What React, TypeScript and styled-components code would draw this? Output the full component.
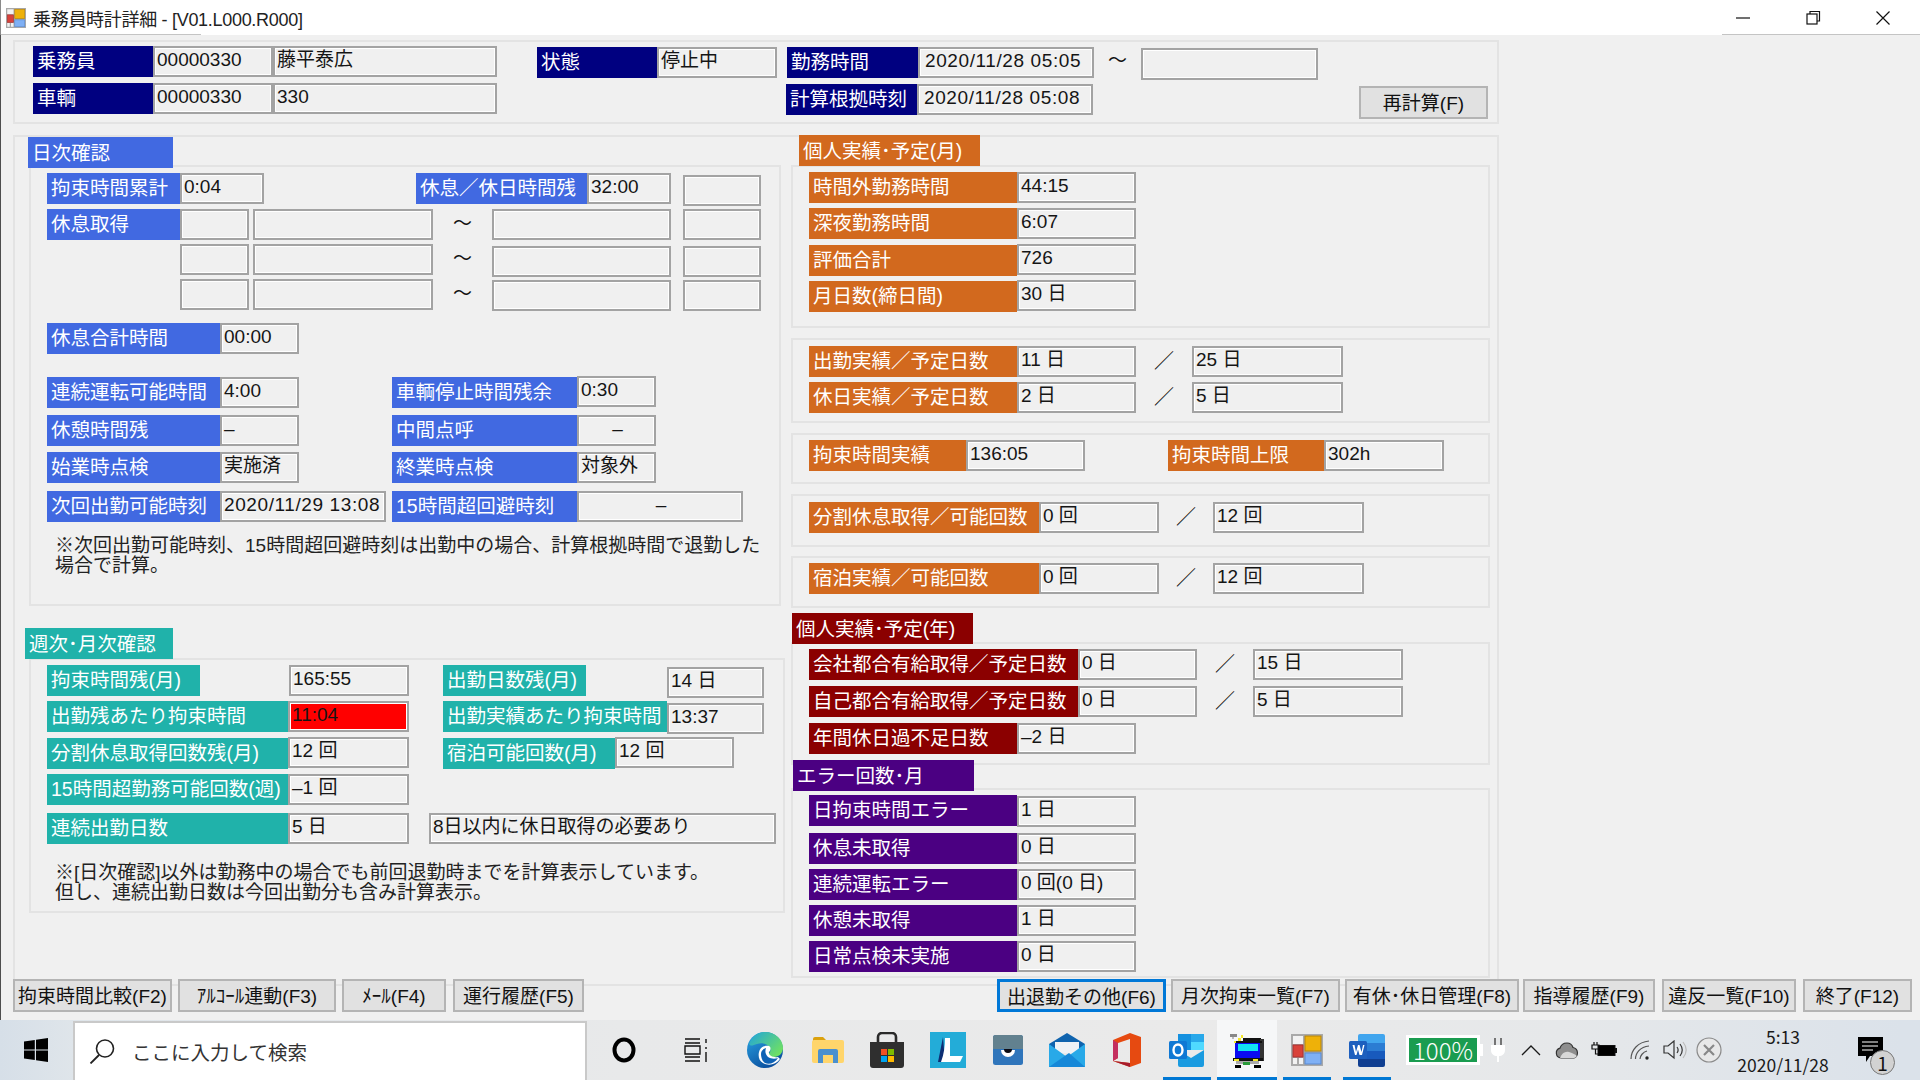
import React from "react";
import styled, { createGlobalStyle } from "styled-components";

const UI_FONT = `"Liberation Sans", "Noto Sans CJK JP", sans-serif`;

const Global = createGlobalStyle`
  html, body { margin: 0; padding: 0; background: #f0f0f0; }
  #root { width: 1920px; height: 1080px; overflow: hidden; }
  * { box-sizing: border-box; }
`;

const tones = {
  navy: "#000080",
  blue: "#4169e1",
  teal: "#20b2aa",
  orange: "#d2691e",
  red: "#8b0000",
  purple: "#4b0082",
};
type Tone = keyof typeof tones;

const Page = styled.div`
  width: 1920px;
  height: 1080px;
  display: flex;
  flex-direction: column;
  font-family: ${UI_FONT};
  color: #111;
`;

const TitleBar = styled.header`
  position: relative;
  height: 35px;
  flex: none;
  background: #fff;
  display: flex;
  align-items: center;
  padding-left: 5px;
  border-left: 1px solid #8a8a8a;
  &::before, &::after {
    content: "";
    position: absolute;
    bottom: 0;
    height: 1px;
    background: #c4c4c4;
  }
  &::before { left: 0; width: 200px; }
  &::after { right: 0; width: 198px; }
`;

const TitleText = styled.span`
  margin-left: 7px;
  font-size: 18px;
  letter-spacing: -0.3px;
  color: #222;
`;

const WindowControls = styled.div`
  margin-left: auto;
  display: flex;
  height: 100%;
  padding-right: 2px;
`;

const ControlButton = styled.div`
  width: 70px;
  display: flex;
  align-items: center;
  justify-content: center;
`;

const Client = styled.main`
  flex: 1;
  min-height: 0;
  background: #f0f0f0;
  border-left: 1px solid #4d4d4d;
  padding: 5px 0 0 12px;
`;

const GroupFrame = styled.section<{ $w: number; $h: number; $mt?: number }>`
  width: ${(p) => p.$w}px;
  height: ${(p) => p.$h}px;
  margin-top: ${(p) => p.$mt ?? 0}px;
  border: 2px solid #e3e3e3;
`;

const HeaderFrame = styled(GroupFrame)`
  padding: 4px 0 0 18px;
`;

const MainFrame = styled(GroupFrame)`
  display: flex;
  align-items: flex-start;
`;

const LeftColumn = styled.div`
  width: 776px;
  flex: none;
  padding-left: 10px;
`;

const RightColumn = styled.div`
  flex: none;
  margin-top: -2px;
`;

const SectionTitle = styled.h2<{ $tone: Tone; $w: number; $ml?: number; $mt?: number }>`
  position: relative;
  z-index: 1;
  margin: ${(p) => p.$mt ?? 0}px 0 -3px ${(p) => p.$ml ?? 0}px;
  width: ${(p) => p.$w}px;
  height: 31px;
  background: ${(p) => tones[p.$tone]};
  color: #fff;
  font-size: 19.5px;
  font-weight: 400;
  line-height: 32px;
  padding-left: 4px;
  white-space: nowrap;
`;

const Panel = styled.div<{ $w: number; $h: number; $ml?: number; $mt?: number; $pt?: number }>`
  width: ${(p) => p.$w}px;
  height: ${(p) => p.$h}px;
  margin-left: ${(p) => p.$ml ?? 0}px;
  margin-top: ${(p) => p.$mt ?? 0}px;
  padding: ${(p) => p.$pt ?? 5}px 0 0 16px;
  border: 2px solid #e3e3e3;
`;

const Row = styled.div<{ $h: number }>`
  display: flex;
  align-items: flex-start;
  height: ${(p) => p.$h}px;
`;

const Label = styled.div<{ $tone: Tone; $w: number; $ml?: number; $dy?: number; $h?: number }>`
  flex: none;
  width: ${(p) => p.$w}px;
  height: ${(p) => p.$h ?? 31}px;
  margin-left: ${(p) => p.$ml ?? 0}px;
  margin-top: ${(p) => p.$dy ?? 0}px;
  background: ${(p) => tones[p.$tone]};
  color: #fff;
  font-size: 19.5px;
  line-height: ${(p) => p.$h ?? 31}px;
  padding-left: 4px;
  white-space: nowrap;
  overflow: hidden;
`;

const Value = styled.div<{ $w: number; $ml?: number; $dy?: number; $h?: number; $center?: boolean; $alert?: boolean; $track?: number; $pl?: number }>`
  flex: none;
  width: ${(p) => p.$w}px;
  height: ${(p) => p.$h ?? 31}px;
  margin-left: ${(p) => p.$ml ?? 0}px;
  margin-top: ${(p) => p.$dy ?? 0}px;
  background: ${(p) => (p.$alert ? "#ff0000" : "#f0f0f0")};
  border: 2px solid #a3a3a3;
  box-shadow: inset 0 0 0 1px #fff;
  font-size: 19px;
  letter-spacing: ${(p) => p.$track ?? 0}px;
  color: #151515;
  line-height: 24px;
  padding-left: ${(p) => p.$pl ?? 2}px;
  text-align: ${(p) => (p.$center ? "center" : "left")};
  white-space: nowrap;
  overflow: hidden;
`;

const Tilde = styled.div<{ $w: number; $ml?: number }>`
  flex: none;
  width: ${(p) => p.$w}px;
  margin-left: ${(p) => p.$ml ?? 0}px;
  text-align: center;
  font-size: 19px;
  line-height: 30px;
`;

const Slash = styled.div<{ $w: number }>`
  flex: none;
  width: ${(p) => p.$w}px;
  text-align: center;
  font-size: 20px;
  font-family: "Noto Sans CJK JP", sans-serif;
  line-height: 28px;
`;

const Note = styled.p`
  margin: 0 0 0 8px;
  width: 710px;
  font-size: 19px;
  line-height: 19.5px;
  color: #222;
`;

const HeaderButton = styled.button`
  flex: none;
  width: 129px;
  height: 33px;
  margin: 3px 0 0 266px;
  background: #e1e1e1;
  border: 2px solid #b4b4b4;
  font-family: inherit;
  font-size: 19px;
  color: #111;
  padding: 0 0 2px;
`;

const ButtonBar = styled.div`
  display: flex;
  justify-content: space-between;
  margin-top: -7px;
  padding-right: 8px;
  height: 33px;
`;

const ButtonGroup = styled.div`
  display: flex;
`;

const KeyButton = styled.button<{ $w: number; $ml?: number; $focused?: boolean }>`
  flex: none;
  width: ${(p) => p.$w}px;
  height: 33px;
  margin-left: ${(p) => p.$ml ?? 0}px;
  background: #e1e1e1;
  border: ${(p) => (p.$focused ? "3px solid #0078d7" : "2px solid #b4b4b4")};
  font-family: inherit;
  font-size: 19px;
  color: #111;
  padding: 0 0 2px;
  white-space: nowrap;
  overflow: hidden;
`;

const Taskbar = styled.footer`
  height: 60px;
  flex: none;
  display: flex;
  background: linear-gradient(90deg, #d6dfe8 0, #dfe5ea 73px, #e8e9ea 620px, #eaeaea 1200px, #e6e8ea 1560px, #dbe2ea 1900px);
`;

const StartSlot = styled.div`
  width: 73px;
  flex: none;
  display: flex;
  align-items: center;
  justify-content: center;
  padding-right: 2px;
`;

const SearchBox = styled.div`
  width: 514px;
  flex: none;
  margin-top: 1px;
  background: #fff;
  border: 2px solid #c9c9c9;
  border-bottom: none;
  display: flex;
  align-items: center;
  padding-left: 14px;
`;

const SearchText = styled.span`
  margin-left: 17px;
  font-size: 19.5px;
  color: #333;
`;

const Slot = styled.div<{ $w: number; $active?: boolean; $run?: boolean }>`
  position: relative;
  flex: none;
  width: ${(p) => p.$w}px;
  display: flex;
  align-items: center;
  justify-content: center;
  background: ${(p) => (p.$active ? "#f6f7f8" : "transparent")};
  &::after {
    content: "";
    display: ${(p) => (p.$run ? "block" : "none")};
    position: absolute;
    bottom: 0;
    left: ${(p) => (p.$active ? 0 : 6)}px;
    right: ${(p) => (p.$active ? 0 : 6)}px;
    height: 3px;
    background: #0078d4;
  }
`;

const BatteryMeter = styled.div`
  flex: none;
  width: 74px;
  height: 30px;
  margin: 15px 0 0 9px;
  background: #1a9c50;
  border: 3px solid #fff;
  color: #fff;
  font-size: 24px;
  line-height: 24px;
  text-align: center;
  font-family: "Noto Sans CJK JP", sans-serif;
  font-weight: 300;
`;

const BatteryNub = styled.div`
  flex: none;
  width: 3px;
  height: 12px;
  margin-top: 24px;
  background: #fff;
`;

const Clock = styled.div`
  flex: none;
  width: 114px;
  display: flex;
  flex-direction: column;
  align-items: center;
  font-family: "Noto Sans CJK JP", sans-serif;
  font-size: 17.5px;
  color: #1a1a1a;
  padding-top: 3px;
  line-height: 28px;
`;

const Badge = styled.div`
  position: absolute;
  left: 30px;
  top: 30px;
  width: 25px;
  height: 25px;
  border-radius: 50%;
  background: #d2d2d2;
  border: 1px solid #777;
  font-size: 19px;
  line-height: 24px;
  text-align: center;
  color: #111;
  font-family: "Noto Sans CJK JP", sans-serif;
`;

/* ---------- drawings ---------- */

const AppIcon = ({ size = 32 }: { size?: number }) => (
  <svg width={size} height={size} viewBox="0 0 32 32">
    <rect x="0" y="0" width="32" height="32" fill="#a9a9a9" />
    <rect x="2" y="2" width="10" height="8" fill="#f2f2f2" />
    <rect x="14" y="2" width="16" height="15" fill="#eeb109" stroke="#b8860b" />
    <rect x="2" y="11" width="10" height="12" fill="#d9423a" stroke="#a33" />
    <rect x="14" y="19" width="16" height="11" fill="#7fb0f5" stroke="#5a8ad0" />
    <rect x="2" y="24" width="4" height="6" fill="#f2f2f2" />
    <rect x="8" y="24" width="4" height="6" fill="#f2f2f2" />
  </svg>
);

const WinLogo = () => (
  <svg width="24" height="24" viewBox="0 0 24 24" fill="#000">
    <path d="M0 3.4 10.8 1.9V11.4H0zM12 1.7 24 0V11.4H12zM0 12.6H10.8V22.1L0 20.6zM12 12.6H24V24L12 22.3z" />
  </svg>
);

const Magnifier = () => (
  <svg width="26" height="25" viewBox="0 0 26 25" fill="none" stroke="#222" strokeWidth="1.6">
    <circle cx="16" cy="9.5" r="8.5" />
    <path d="M10 16 1.5 24.5" strokeWidth="1.8" />
  </svg>
);

const CortanaRing = () => (
  <svg width="24" height="26" viewBox="0 0 24 26" fill="none">
    <ellipse cx="12" cy="13" rx="9.5" ry="10.5" stroke="#000" strokeWidth="4" />
  </svg>
);

const TaskView = () => (
  <svg width="24" height="24" viewBox="0 0 24 24" fill="none" stroke="#111" strokeWidth="1.4">
    <path d="M1 1h15M1 23h15M1 5h15M1 19h15M1 8h15v8H1zM22 1v4M22 9v2M22 14v10" />
  </svg>
);

const Edge = () => (
  <svg width="36" height="36" viewBox="0 0 36 36">
    <defs>
      <linearGradient id="edgeBlue" x1="0" y1="0" x2="0.6" y2="1">
        <stop offset="0" stopColor="#2aa6e6" />
        <stop offset="1" stopColor="#0b4f9e" />
      </linearGradient>
      <linearGradient id="edgeGreen" x1="0" y1="0" x2="1" y2="0.7">
        <stop offset="0" stopColor="#1fa4dc" />
        <stop offset="1" stopColor="#6fe063" />
      </linearGradient>
    </defs>
    <circle cx="18" cy="18" r="18" fill="url(#edgeBlue)" />
    <path d="M2 12C5 4 11 0 18 0c10 0 18 7 18 16 0 5-4 9-9 9-3 0-6-1-6-3 2-1 3-3 2-6-2-4-8-6-13-4-4 1-6 3-8 0z" fill="url(#edgeGreen)" />
    <path d="M12 20c1-5 6-7 10-6 2 1 2 4 0 6-1 3 4 6 9 5l2 2c-4 6-12 7-17 4-4-2-5-7-4-11z" fill="#fff" />
    <path d="M14 22c0-3 2-5 5-6-1 3-1 6 2 9 3 2 7 2 10 1-3 5-9 7-13 5-3-2-4-6-4-9z" fill="#0e62b5" />
  </svg>
);

const Explorer = () => (
  <svg width="32" height="26" viewBox="0 0 32 26">
    <path d="M1 2a2 2 0 0 1 2-2h8l4 4H1z" fill="#dba10d" />
    <path d="M0 5a2 2 0 0 1 2-2h28a2 2 0 0 1 2 2v19a2 2 0 0 1-2 2H2a2 2 0 0 1-2-2z" fill="#ffd56b" />
    <path d="M6 26V14a2 2 0 0 1 2-2h16a2 2 0 0 1 2 2v12h-5v-8H11v8z" fill="#4a90cf" />
  </svg>
);

const Store = () => (
  <svg width="36" height="36" viewBox="0 0 36 36">
    <path d="M9 10V5a4 4 0 0 1 4-4h10a4 4 0 0 1 4 4v5" fill="none" stroke="#2a2a2a" strokeWidth="2.6" />
    <path d="M1 10h34v23a3 3 0 0 1-3 3H4a3 3 0 0 1-3-3z" fill="#2f2f2f" />
    <rect x="12" y="17" width="6" height="6" fill="#f25022" />
    <rect x="19" y="17" width="6" height="6" fill="#7fba00" />
    <rect x="12" y="24" width="6" height="6" fill="#00a4ef" />
    <rect x="19" y="24" width="6" height="6" fill="#ffb900" />
  </svg>
);

const LApp = () => (
  <svg width="36" height="36" viewBox="0 0 36 36">
    <rect width="36" height="36" fill="#23acd8" />
    <path d="M13 5 8 30h7z" fill="#0d2f74" />
    <path d="M15 6h5v18h13l-3 6H11c3-8 4-16 4-24z" fill="#fff" />
  </svg>
);

const Pocket = () => (
  <svg width="30" height="30" viewBox="0 0 30 30">
    <rect width="30" height="30" rx="2.5" fill="#2f75bb" />
    <path d="M0 2.5A2.500 2.500 0 0 1 2.500 0h25A2.500 2.500 0 0 1 30 2.500V14H0z" fill="#62818f" />
    <path d="M8 15h14a7 7 0 0 1-14 0z" fill="#fff" />
    <path d="M11 14h8a4 4 0 0 1-8 0z" fill="#0b0b14" />
  </svg>
);

const Mail = () => (
  <svg width="36" height="34" viewBox="0 0 36 34">
    <path d="M0 11 18 0l18 11v5H0z" fill="#0f63ae" />
    <path d="M6 9h24v11H6z" fill="#eef2f6" />
    <path d="M0 11 18 24 36 11v23H0z" fill="#28a9e8" />
    <path d="M36 34H0l20-14z" fill="#1688d8" />
  </svg>
);

const Office = () => (
  <svg width="28" height="34" viewBox="0 0 28 34">
    <path d="M17 0 28 4v26l-11 4L0 28l17 2V6L5 10v15l-5 3V7z" fill="#e64a11" />
    <path d="M5 10 0 7v21l5-3z" fill="#c42f5f" />
    <path d="M17 30 0 28l17 6z" fill="#a71c2d" />
  </svg>
);

const Outlook = () => (
  <svg width="36" height="33" viewBox="0 0 36 33">
    <rect x="9" y="0" width="26" height="16" fill="#1490df" />
    <rect x="22" y="0" width="13" height="8" fill="#28a8ea" />
    <rect x="22" y="8" width="13" height="8" fill="#50d9ff" />
    <path d="M9 16 22 24 35 16v15a2 2 0 0 1-2 2H11a2 2 0 0 1-2-2z" fill="#1a9be0" />
    <rect x="0" y="7" width="18" height="18" rx="1.500" fill="#0f78d4" />
    <ellipse cx="9" cy="16" rx="4.500" ry="5.500" fill="none" stroke="#fff" strokeWidth="2.400" />
  </svg>
);

const Truck = () => (
  <svg width="36" height="36" viewBox="0 0 36 36" shapeRendering="crispEdges">
    <rect x="1" y="2" width="7" height="3" fill="#888" />
    <rect x="3" y="5" width="2" height="2" fill="#bbb" />
    <rect x="9" y="6" width="3" height="3" fill="#f5e92a" />
    <rect x="5" y="9" width="3" height="2" fill="#f5e92a" />
    <rect x="12" y="3" width="2" height="3" fill="#f5e92a" />
    <rect x="14" y="6" width="18" height="3" fill="#111" />
    <rect x="31" y="7" width="4" height="22" fill="#333" />
    <rect x="7" y="9" width="26" height="2" fill="#111" />
    <rect x="6" y="11" width="25" height="16" fill="#0a0af0" />
    <rect x="9" y="12" width="20" height="7" fill="#12e4f0" />
    <rect x="4" y="26" width="30" height="3" fill="#111" />
    <rect x="5" y="27" width="5" height="2" fill="#f5e92a" />
    <rect x="24" y="27" width="5" height="2" fill="#f5e92a" />
    <rect x="7" y="29" width="23" height="3" fill="#aaa" />
    <rect x="14" y="30" width="7" height="3" fill="#2a9a3a" />
    <rect x="6" y="33" width="6" height="3" fill="#000" />
    <rect x="25" y="33" width="7" height="3" fill="#000" />
  </svg>
);

const Word = () => (
  <svg width="36" height="33" viewBox="0 0 36 33">
    <path d="M9 2a2 2 0 0 1 2-2h23a2 2 0 0 1 2 2v7H9z" fill="#41a5ee" />
    <rect x="9" y="9" width="27" height="8" fill="#2b7cd3" />
    <rect x="9" y="17" width="27" height="8" fill="#185abd" />
    <path d="M9 25h27v6a2 2 0 0 1-2 2H11a2 2 0 0 1-2-2z" fill="#103f91" />
    <rect x="0" y="7" width="18" height="18" rx="1.500" fill="#1d5fbe" />
    <path d="M3.500 11h2l1.500 7 2-7h1.500l2 7 1.500-7h1.500l-2.500 10H10.500L9 15.500 7.500 21H6z" fill="#fff" />
  </svg>
);

const PlugIcon = () => (
  <svg width="16" height="25" viewBox="0 0 16 25">
    <path d="M5 0v7M11 0v7" stroke="#444" strokeWidth="1.400" />
    <path d="M1 7h14v5c0 4-3 6-6 6v6H7v-6c-3 0-6-2-6-6z" fill="#fff" />
  </svg>
);

const Chevron = () => (
  <svg width="20" height="11" viewBox="0 0 20 11" fill="none" stroke="#1a1a1a" strokeWidth="1.300">
    <path d="M1 10 10 1l9 9" />
  </svg>
);

const Cloud = () => (
  <svg width="25" height="17" viewBox="0 0 25 17">
    <path d="M6 16a5 5 0 0 1-1-9.800C6 2.500 9 1 12 1c3 0 5 1.500 6 4.500a5.500 5.500 0 0 1 1 10.500z" fill="#8e8e8e" stroke="#333" strokeWidth="1.200" />
    <path d="M5 16c2-5 5-7 9-6 3 1 6 2 8 4-1 1-2 2-3 2z" fill="#d8d8d8" />
  </svg>
);

const PowerBattery = () => (
  <svg width="26" height="16" viewBox="0 0 26 16">
    <path d="M3 0v3M6 0v3M1 3h7v4H1zM4.500 7v5h3" stroke="#111" strokeWidth="1.200" fill="none" />
    <rect x="7" y="3.500" width="17" height="10" fill="#000" stroke="#111" />
    <rect x="24" y="6" width="2" height="5" fill="#111" />
  </svg>
);

const Wifi = () => (
  <svg width="20" height="20" viewBox="0 0 20 20" fill="none" stroke="#555" strokeWidth="1.200">
    <path d="M1 19C1 10 8 2 19 1M5.500 19C5.500 13 10 7 19 6M10 19c0-3 3-7 7-8" />
    <circle cx="17" cy="18" r="1.700" fill="#222" stroke="none" />
  </svg>
);

const Speaker = () => (
  <svg width="24" height="20" viewBox="0 0 24 20" fill="none" stroke="#333" strokeWidth="1.200">
    <path d="M1 6h4l6-5v17l-6-5H1z" />
    <path d="M14 7c1.500 2 1.500 4 0 6M17 4c3 4 3 8 0 12" />
    <path d="M20 2c4 5 4 11 0 16" stroke="#bbb" />
  </svg>
);

const XCircle = () => (
  <svg width="26" height="26" viewBox="0 0 26 26" fill="none">
    <circle cx="13" cy="13" r="12" stroke="#8a8a8a" fill="#e8e8e8" strokeWidth="1.200" />
    <path d="M8 8 18 18M18 8 8 18" stroke="#888" strokeWidth="2.200" />
  </svg>
);

const Bubble = () => (
  <svg width="25" height="26" viewBox="0 0 25 26">
    <path d="M0 0h25v19H12l-4 6v-6H0z" fill="#000" />
    <path d="M4 5h16M4 9h16M4 13h11" stroke="#fff" strokeWidth="1.200" />
  </svg>
);

/* ---------- page ---------- */

export default function App() {
  const day = (n: string) => `${n} 日`;
  const times = (n: string) => `${n} 回`;
  return (
    <Page>
      <Global />
      <TitleBar>
        <AppIcon size={20} />
        <TitleText>乗務員時計詳細 - [V01.L000.R000]</TitleText>
        <WindowControls>
          <ControlButton>
            <svg width="16" height="16" viewBox="0 0 16 16"><path d="M1 8h14" stroke="#111" strokeWidth="1.200" /></svg>
          </ControlButton>
          <ControlButton>
            <svg width="16" height="16" viewBox="0 0 16 16" fill="none" stroke="#111" strokeWidth="1.200"><rect x="2" y="4" width="10" height="10" /><path d="M5 4V1.500h9.500V11H12" /></svg>
          </ControlButton>
          <ControlButton>
            <svg width="16" height="16" viewBox="0 0 16 16"><path d="M1.500 1.500 14.500 14.500M14.500 1.500 1.500 14.500" stroke="#111" strokeWidth="1.200" /></svg>
          </ControlButton>
        </WindowControls>
      </TitleBar>

      <Client>
        <HeaderFrame $w={1486} $h={84}>
          <Row $h={37}>
            <Label $tone="navy" $w={120}>乗務員</Label>
            <Value $w={120}>00000330</Value>
            <Value $w={224}>藤平泰広</Value>
            <Label $tone="navy" $w={120} $ml={40} $dy={1}>状態</Label>
            <Value $w={120} $dy={1}>停止中</Value>
            <Label $tone="navy" $w={131} $ml={10} $dy={1}>勤務時間</Label>
            <Value $w={176} $dy={1} $track={0.6} $pl={5}>2020/11/28 05:05</Value>
            <Tilde $w={47}>～</Tilde>
            <Value $w={177} $dy={2} $h={32} />
          </Row>
          <Row $h={37}>
            <Label $tone="navy" $w={120}>車輌</Label>
            <Value $w={120}>00000330</Value>
            <Value $w={224}>330</Value>
            <Label $tone="navy" $w={131} $ml={289} $dy={1}>計算根拠時刻</Label>
            <Value $w={176} $dy={1} $track={0.6} $pl={5}>2020/11/28 05:08</Value>
            <HeaderButton>再計算(F)</HeaderButton>
          </Row>
        </HeaderFrame>

        <MainFrame $w={1486} $h={851} $mt={11}>
          <LeftColumn>
            <SectionTitle $tone="blue" $w={145} $ml={3}>日次確認</SectionTitle>
            <Panel $w={752} $h={441} $ml={4}>
              <Row $h={37}>
                <Label $tone="blue" $w={133} $dy={1}>拘束時間累計</Label>
                <Value $w={84} $dy={1}>0:04</Value>
                <Label $tone="blue" $w={171} $ml={152} $dy={1}>休息／休日時間残</Label>
                <Value $w={84} $dy={1}>32:00</Value>
                <Value $w={78} $ml={12} $dy={3} />
              </Row>
              <Row $h={35}>
                <Label $tone="blue" $w={133}>休息取得</Label>
                <Value $w={69} />
                <Value $w={180} $ml={4} />
                <Tilde $w={59}>～</Tilde>
                <Value $w={179} />
                <Value $w={78} $ml={12} />
              </Row>
              <Row $h={35}>
                <Value $w={69} $ml={133} />
                <Value $w={180} $ml={4} />
                <Tilde $w={59}>～</Tilde>
                <Value $w={179} $dy={2} />
                <Value $w={78} $ml={12} $dy={2} />
              </Row>
              <Row $h={44}>
                <Value $w={69} $ml={133} />
                <Value $w={180} $ml={4} />
                <Tilde $w={59}>～</Tilde>
                <Value $w={179} $dy={1} />
                <Value $w={78} $ml={12} $dy={1} />
              </Row>
              <Row $h={54}>
                <Label $tone="blue" $w={173}>休息合計時間</Label>
                <Value $w={79}>00:00</Value>
              </Row>
              <Row $h={38}>
                <Label $tone="blue" $w={173}>連続運転可能時間</Label>
                <Value $w={79}>4:00</Value>
                <Label $tone="blue" $w={185} $ml={93}>車輌停止時間残余</Label>
                <Value $w={79} $dy={-1}>0:30</Value>
              </Row>
              <Row $h={37}>
                <Label $tone="blue" $w={173}>休憩時間残</Label>
                <Value $w={79}>–</Value>
                <Label $tone="blue" $w={185} $ml={93}>中間点呼</Label>
                <Value $w={79} $center>–</Value>
              </Row>
              <Row $h={39}>
                <Label $tone="blue" $w={173}>始業時点検</Label>
                <Value $w={79}>実施済</Value>
                <Label $tone="blue" $w={185} $ml={93}>終業時点検</Label>
                <Value $w={79}>対象外</Value>
              </Row>
              <Row $h={45}>
                <Label $tone="blue" $w={173}>次回出勤可能時刻</Label>
                <Value $w={166} $track={0.6}>2020/11/29 13:08</Value>
                <Label $tone="blue" $w={185} $ml={6}>15時間超回避時刻</Label>
                <Value $w={166} $center>–</Value>
              </Row>
              <Note>※次回出勤可能時刻、15時間超回避時刻は出勤中の場合、計算根拠時間で退勤した場合で計算。</Note>
            </Panel>

            <SectionTitle $tone="teal" $w={148} $mt={22}>週次･月次確認</SectionTitle>
            <Panel $w={756} $h={255} $ml={4} $mt={2}>
              <Row $h={36}>
                <Label $tone="teal" $w={153}>拘束時間残(月)</Label>
                <Value $w={120} $ml={89}>165:55</Value>
                <Label $tone="teal" $w={143} $ml={34}>出勤日数残(月)</Label>
                <Value $w={97} $ml={81} $dy={2}>14 日</Value>
              </Row>
              <Row $h={37}>
                <Label $tone="teal" $w={241}>出勤残あたり拘束時間</Label>
                <Value $w={121} $alert>11:04</Value>
                <Label $tone="teal" $w={224} $ml={34}>出勤実績あたり拘束時間</Label>
                <Value $w={97} $dy={2}>13:37</Value>
              </Row>
              <Row $h={36}>
                <Label $tone="teal" $w={241}>分割休息取得回数残(月)</Label>
                <Value $w={121} $dy={-1}>{times("12")}</Value>
                <Label $tone="teal" $w={172} $ml={34}>宿泊可能回数(月)</Label>
                <Value $w={119} $dy={-1}>{times("12")}</Value>
              </Row>
              <Row $h={39}>
                <Label $tone="teal" $w={241}>15時間超勤務可能回数(週)</Label>
                <Value $w={121}>{times("–1")}</Value>
              </Row>
              <Row $h={50}>
                <Label $tone="teal" $w={241}>連続出勤日数</Label>
                <Value $w={121}>{day("5")}</Value>
                <Value $w={347} $ml={20}>8日以内に休日取得の必要あり</Value>
              </Row>
              <Note>※[日次確認]以外は勤務中の場合でも前回退勤時までを計算表示しています。<br />但し、連続出勤日数は今回出勤分も含み計算表示。</Note>
            </Panel>
          </LeftColumn>

          <RightColumn>
            <SectionTitle $tone="orange" $w={181} $ml={8}>個人実績･予定(月)</SectionTitle>
            <Panel $w={699} $h={163} $mt={2} $pt={5}>
              <Row $h={36}>
                <Label $tone="orange" $w={208}>時間外勤務時間</Label>
                <Value $w={119}>44:15</Value>
              </Row>
              <Row $h={36}>
                <Label $tone="orange" $w={208}>深夜勤務時間</Label>
                <Value $w={119}>6:07</Value>
              </Row>
              <Row $h={36}>
                <Label $tone="orange" $w={208} $dy={1}>評価合計</Label>
                <Value $w={119}>726</Value>
              </Row>
              <Row $h={36}>
                <Label $tone="orange" $w={208} $dy={1}>月日数(締日間)</Label>
                <Value $w={119}>{day("30")}</Value>
              </Row>
            </Panel>

            <Panel $w={699} $h={85} $mt={10} $pt={6}>
              <Row $h={36}>
                <Label $tone="orange" $w={208}>出勤実績／予定日数</Label>
                <Value $w={119}>{day("11")}</Value>
                <Slash $w={56}>／</Slash>
                <Value $w={151}>{day("25")}</Value>
              </Row>
              <Row $h={36}>
                <Label $tone="orange" $w={208}>休日実績／予定日数</Label>
                <Value $w={119}>{day("2")}</Value>
                <Slash $w={56}>／</Slash>
                <Value $w={151}>{day("5")}</Value>
              </Row>
            </Panel>

            <Panel $w={699} $h={51} $mt={10} $pt={5}>
              <Row $h={32}>
                <Label $tone="orange" $w={157}>拘束時間実績</Label>
                <Value $w={119}>136:05</Value>
                <Label $tone="orange" $w={156} $ml={83}>拘束時間上限</Label>
                <Value $w={120}>302h</Value>
              </Row>
            </Panel>

            <Panel $w={699} $h={53} $mt={10} $pt={6}>
              <Row $h={32}>
                <Label $tone="orange" $w={230}>分割休息取得／可能回数</Label>
                <Value $w={120}>{times("0")}</Value>
                <Slash $w={54}>／</Slash>
                <Value $w={151}>{times("12")}</Value>
              </Row>
            </Panel>

            <Panel $w={699} $h={52} $mt={9} $pt={5}>
              <Row $h={32}>
                <Label $tone="orange" $w={230}>宿泊実績／可能回数</Label>
                <Value $w={120}>{times("0")}</Value>
                <Slash $w={54}>／</Slash>
                <Value $w={151}>{times("12")}</Value>
              </Row>
            </Panel>

            <SectionTitle $tone="red" $w={181} $ml={1} $mt={5}>個人実績･予定(年)</SectionTitle>
            <Panel $w={699} $h={123} $mt={1} $pt={5}>
              <Row $h={37}>
                <Label $tone="red" $w={269}>会社都合有給取得／予定日数</Label>
                <Value $w={119}>{day("0")}</Value>
                <Slash $w={56}>／</Slash>
                <Value $w={150}>{day("15")}</Value>
              </Row>
              <Row $h={37}>
                <Label $tone="red" $w={269}>自己都合有給取得／予定日数</Label>
                <Value $w={119}>{day("0")}</Value>
                <Slash $w={56}>／</Slash>
                <Value $w={150}>{day("5")}</Value>
              </Row>
              <Row $h={32}>
                <Label $tone="red" $w={208}>年間休日過不足日数</Label>
                <Value $w={119}>{day("–2")}</Value>
              </Row>
            </Panel>

            <SectionTitle $tone="purple" $w={181} $ml={2} $mt={-5}>エラー回数･月</SectionTitle>
            <Panel $w={699} $h={190} $mt={-1} $pt={5}>
              <Row $h={38}>
                <Label $tone="purple" $w={208}>日拘束時間エラー</Label>
                <Value $w={119} $dy={1}>{day("1")}</Value>
              </Row>
              <Row $h={36}>
                <Label $tone="purple" $w={208}>休息未取得</Label>
                <Value $w={119}>{day("0")}</Value>
              </Row>
              <Row $h={36}>
                <Label $tone="purple" $w={208}>連続運転エラー</Label>
                <Value $w={119}>0 回(0 日)</Value>
              </Row>
              <Row $h={36}>
                <Label $tone="purple" $w={208}>休憩未取得</Label>
                <Value $w={119}>{day("1")}</Value>
              </Row>
              <Row $h={32}>
                <Label $tone="purple" $w={208}>日常点検未実施</Label>
                <Value $w={119}>{day("0")}</Value>
              </Row>
            </Panel>
          </RightColumn>
        </MainFrame>

        <ButtonBar>
          <ButtonGroup>
            <KeyButton $w={159}>拘束時間比較(F2)</KeyButton>
            <KeyButton $w={158} $ml={6}>ｱﾙｺｰﾙ連動(F3)</KeyButton>
            <KeyButton $w={104} $ml={6}>ﾒｰﾙ(F4)</KeyButton>
            <KeyButton $w={131} $ml={7}>運行履歴(F5)</KeyButton>
          </ButtonGroup>
          <ButtonGroup>
            <KeyButton $w={169} $focused>出退勤その他(F6)</KeyButton>
            <KeyButton $w={169} $ml={5}>月次拘束一覧(F7)</KeyButton>
            <KeyButton $w={174} $ml={5}>有休･休日管理(F8)</KeyButton>
            <KeyButton $w={132} $ml={4}>指導履歴(F9)</KeyButton>
            <KeyButton $w={134} $ml={7}>違反一覧(F10)</KeyButton>
            <KeyButton $w={109} $ml={7}>終了(F12)</KeyButton>
          </ButtonGroup>
        </ButtonBar>
      </Client>

      <Taskbar>
        <StartSlot><WinLogo /></StartSlot>
        <SearchBox>
          <Magnifier />
          <SearchText>ここに入力して検索</SearchText>
        </SearchBox>
        <Slot $w={73}><CortanaRing /></Slot>
        <Slot $w={72}><TaskView /></Slot>
        <Slot $w={66}><Edge /></Slot>
        <Slot $w={59}><Explorer /></Slot>
        <Slot $w={60}><Store /></Slot>
        <Slot $w={61}><LApp /></Slot>
        <Slot $w={59}><Pocket /></Slot>
        <Slot $w={60}><Mail /></Slot>
        <Slot $w={60}><Office /></Slot>
        <Slot $w={60} $run><Outlook /></Slot>
        <Slot $w={60} $active $run><Truck /></Slot>
        <Slot $w={60} $run><AppIcon /></Slot>
        <Slot $w={60} $run><Word /></Slot>
        <BatteryMeter>100%</BatteryMeter>
        <BatteryNub />
        <Slot $w={30}><PlugIcon /></Slot>
        <Slot $w={36}><Chevron /></Slot>
        <Slot $w={36}><Cloud /></Slot>
        <Slot $w={37}><PowerBattery /></Slot>
        <Slot $w={36}><Wifi /></Slot>
        <Slot $w={34}><Speaker /></Slot>
        <Slot $w={34}><XCircle /></Slot>
        <Clock><span>5:13</span><span>2020/11/28</span></Clock>
        <Slot $w={60}>
          <Bubble />
          <Badge>1</Badge>
        </Slot>
      </Taskbar>
    </Page>
  );
}
